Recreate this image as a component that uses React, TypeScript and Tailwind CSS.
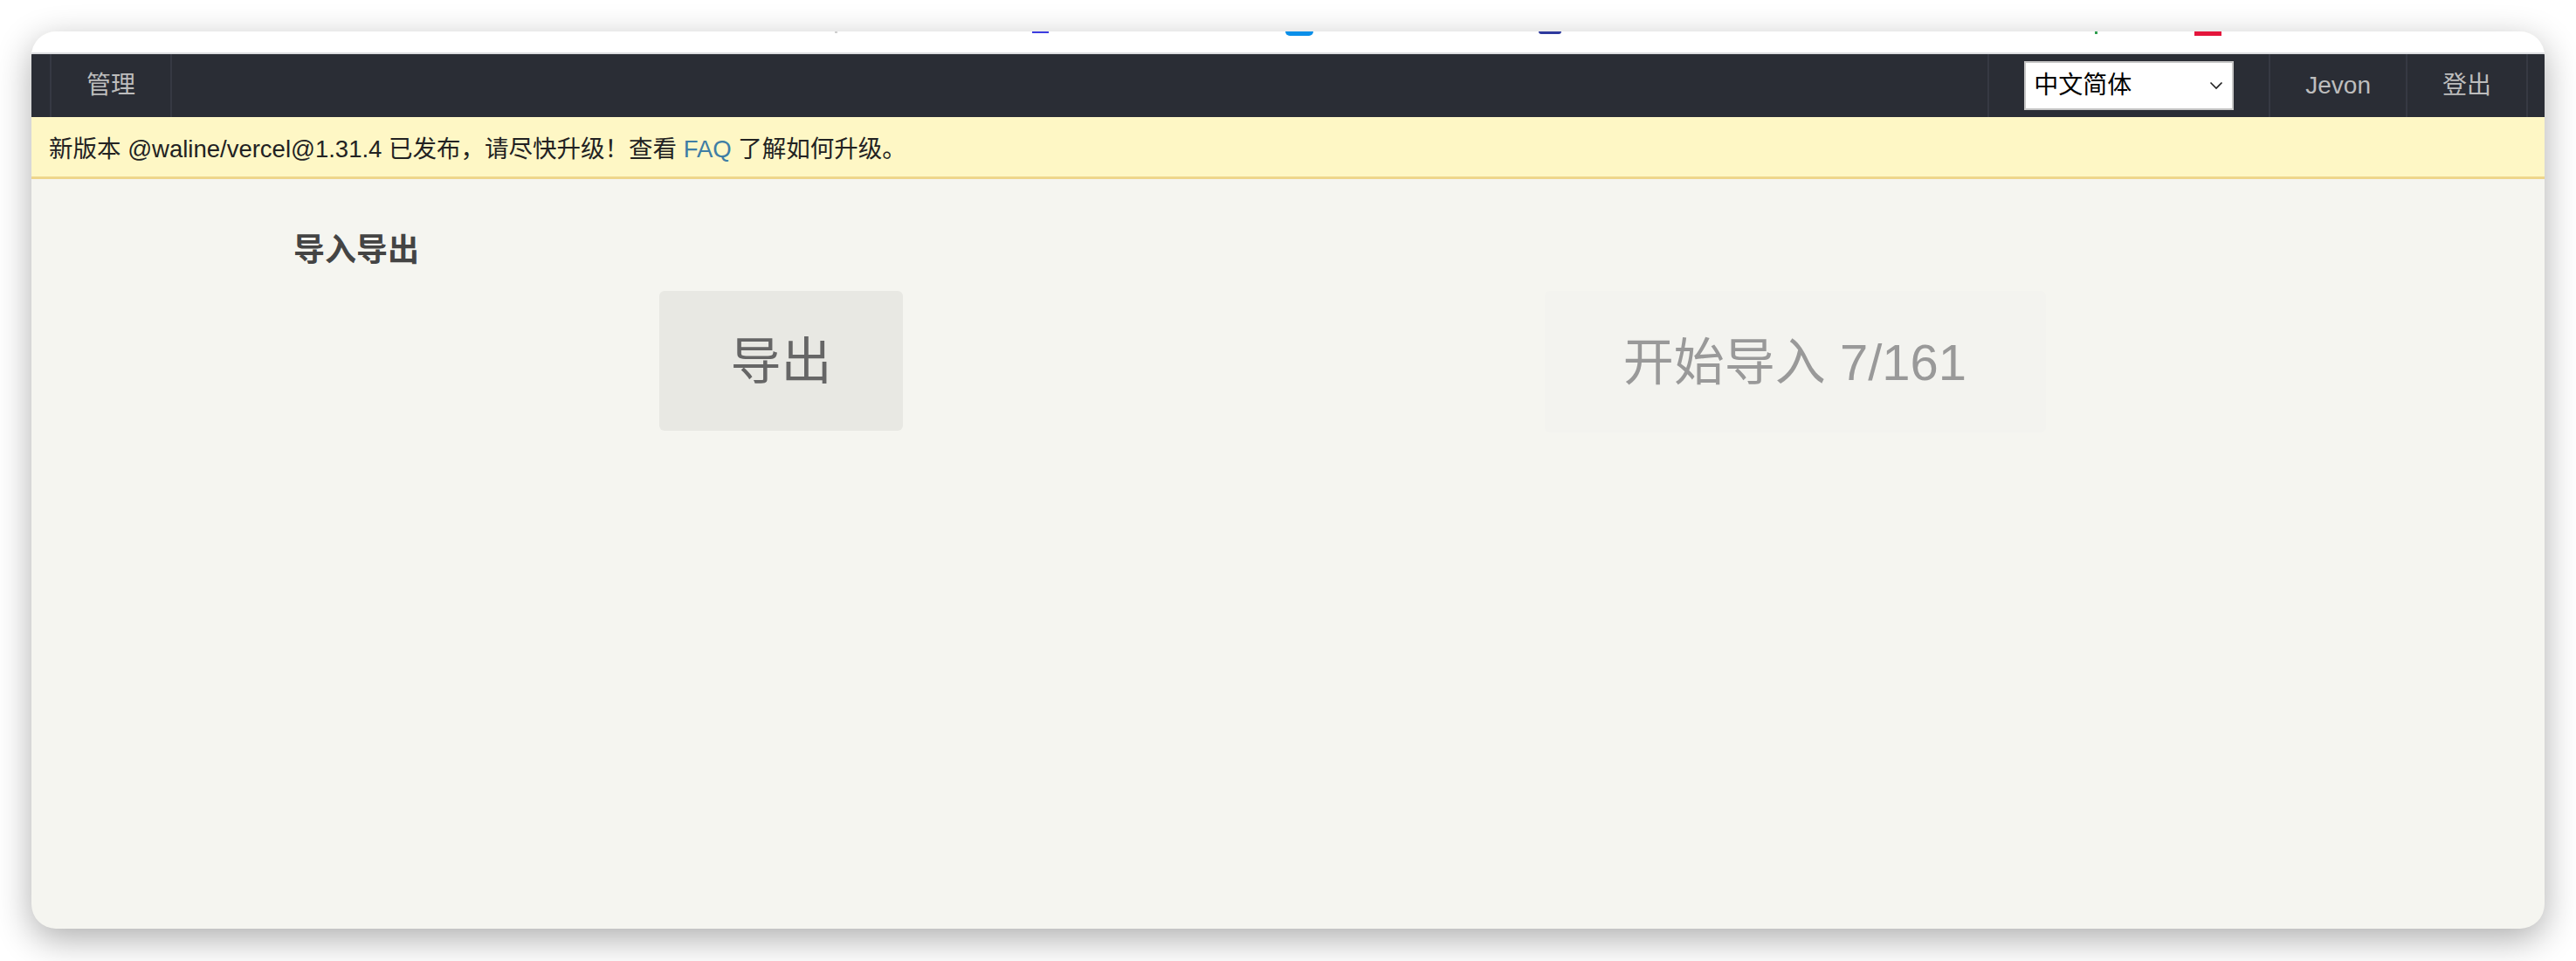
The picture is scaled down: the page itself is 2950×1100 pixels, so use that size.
import React from "react";

const font = "font-['Liberation_Sans','Noto_Sans_CJK_SC',sans-serif]";

function NavItem({ children }: { children: React.ReactNode }) {
    return (
        <div className="flex items-center px-[40px] border-r-2 border-[#363943] text-[28px] text-[#bdbdbd]">
            {children}
        </div>
    );
}

export default function App() {
    return (
        <div className={`w-[2950px] h-[1100px] bg-white pt-[36px] pl-[36px] ${font}`}>
            <div className="w-[2878px] h-[1027px] rounded-[28px] overflow-hidden bg-[#f5f5f0] shadow-[0_12px_40px_rgba(0,0,0,0.32)] flex flex-col">
                {/* clipped browser toolbar strip */}
                <div className="relative h-[26px] shrink-0 bg-white border-b-2 border-[#dcdde0]">
                    <span className="absolute top-0 left-[920px] w-[3px] h-[2px] bg-[#cfcfcf]" />
                    <span className="absolute top-0 left-[1146px] w-[19px] h-[2px] bg-[#3d3de0]" />
                    <span className="absolute top-0 left-[1436px] w-[32px] h-[5px] rounded-b-full bg-[#0b8fe9]" />
                    <span className="absolute top-0 left-[1726px] w-[26px] h-[3px] rounded-b-full bg-[#2e3a9e]" />
                    <span className="absolute top-0 left-[2363px] w-[3px] h-[3px] bg-[#2f9e4f]" />
                    <span className="absolute top-0 left-[2477px] w-[31px] h-[5px] bg-[#e4163c]" />
                </div>

                {/* top nav */}
                <div className="h-[72px] shrink-0 bg-[#2a2d35] flex justify-between pl-[21px] pr-[19px]">
                    <div className="flex border-l-2 border-[#363943]">
                        <NavItem>管理</NavItem>
                    </div>
                    <div className="flex border-l-2 border-[#363943]">
                        <div className="flex items-center px-[40px] border-r-2 border-[#363943]">
                            <div className="w-[240px] h-[56px] bg-white border-2 border-[#c6c6c6] flex items-center justify-between pl-[9px] pr-[10px] text-[28px] text-black">
                                <span>中文简体</span>
                                <svg width="16" height="10" viewBox="0 0 16 10" fill="none" stroke="#222" strokeWidth="1.6">
                                    <path d="M1.5 1.5 L8 8 L14.5 1.5" />
                                </svg>
                            </div>
                        </div>
                        <NavItem>Jevon</NavItem>
                        <NavItem>登出</NavItem>
                    </div>
                </div>

                {/* update notice */}
                <div className="h-[71px] shrink-0 bg-[#fef7c5] border-b-[3px] border-[#eed68b] flex items-center pl-[20px] pt-[5px] text-[27.5px] text-[#222]">
                    <p>
                        新版本 @waline/vercel@1.31.4 已发布，请尽快升级！查看{" "}
                        <a className="text-[#3f7ea5]">FAQ</a> 了解如何升级。
                    </p>
                </div>

                {/* import / export */}
                <div className="w-[2322px] mx-[278px] pt-[55px]">
                    <h2 className="pl-[22px] text-[36px] leading-[54px] font-bold text-[#444]">导入导出</h2>
                    <div className="grid grid-cols-2 mt-[19px]">
                        <div className="flex justify-center">
                            <button className="w-[279px] h-[160px] rounded-[6px] bg-[#e8e8e3] text-[58px] text-[#666]">
                                导出
                            </button>
                        </div>
                        <div className="flex justify-center">
                            <button className="w-[574px] h-[162px] rounded-[6px] bg-[#f3f3ef] text-[58px] text-[#999]">
                                开始导入 7/161
                            </button>
                        </div>
                    </div>
                </div>
            </div>
        </div>
    );
}
